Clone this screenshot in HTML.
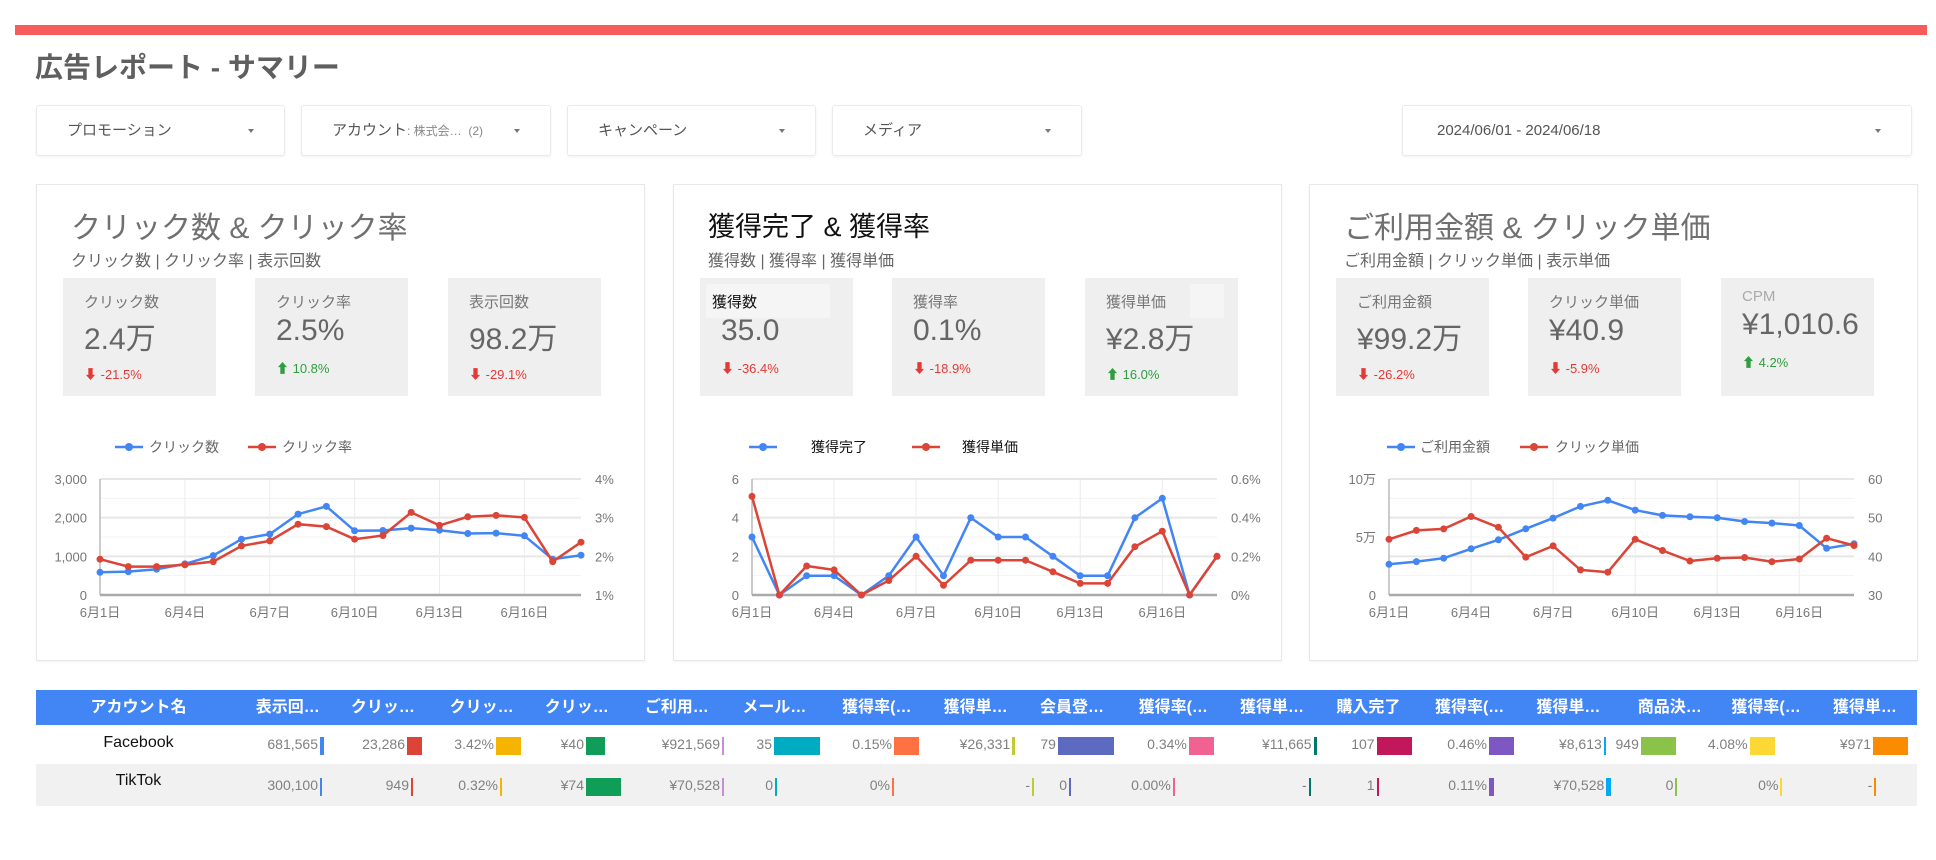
<!DOCTYPE html>
<html><head><meta charset="utf-8">
<style>
*{box-sizing:border-box;margin:0;padding:0}
body{width:1936px;height:860px;background:#fff;font-family:"Liberation Sans","Noto Sans CJK JP",sans-serif;position:relative;overflow:hidden;color:#616161}
.abs{position:absolute}
.bar{left:15px;top:25px;width:1912px;height:10px;background:#f75c5c}
.title{left:35px;top:46px;font-size:28px;font-weight:bold;color:#5f5f5f;letter-spacing:0}
.flt{top:105px;height:51px;border:1px solid #eaeaea;border-radius:3px;box-shadow:0 1px 2px rgba(0,0,0,.06);font-size:15px;color:#555;padding:0 0 0 30px;line-height:49px}
.flt:after{content:"";position:absolute;right:30px;top:23px;border:3px solid transparent;border-top:4px solid #777}
.card{top:184px;width:609px;height:477px;border:1px solid #e8e8e8;box-shadow:0 1px 2px rgba(0,0,0,.05)}
.ct{position:absolute;left:34px;top:18px;font-size:30px;color:#707070}
.cs{position:absolute;left:34px;top:62px;font-size:16px;color:#666}
.kpi{position:absolute;top:93px;width:153px;height:118px;background:#efefef}
.kl{position:absolute;left:21px;top:13px;font-size:15px;color:#777}
.kv{position:absolute;left:21px;top:36px;font-size:30px;color:#666}
.kd{position:absolute;left:21px;font-size:13px}
.dn{color:#e53935}.up{color:#2e9e3e}
svg{position:absolute;left:0;top:0}
.th{top:690px;left:36px;width:1881px;height:35px;background:#4285f4}
.thc{position:absolute;top:0;height:35px;line-height:35px;color:#fff;font-weight:bold;font-size:16px;text-align:center}
.r2{top:764px;left:36px;width:1881px;height:42px;background:#f1f1f1}
.cell{position:absolute;font-size:14px;color:#808080;white-space:nowrap}
</style></head><body>
<div class="abs bar"></div>
<div class="abs title">広告レポート - サマリー</div>
<div class="abs flt" style="left:36px;width:249px">プロモーション</div>
<div class="abs flt" style="left:301px;width:250px">アカウント<span style="font-size:12px;color:#888">: 株式会… &nbsp;(2)</span></div>
<div class="abs flt" style="left:567px;width:249px">キャンペーン</div>
<div class="abs flt" style="left:832px;width:250px">メディア</div>
<div class="abs flt" style="left:1402px;width:510px;padding-left:34px">2024/06/01 - 2024/06/18</div>

<div class="abs card" style="left:36px" id="c1">
 <div class="ct">クリック数 &amp; クリック率</div>
 <div class="cs">クリック数 | クリック率 | 表示回数</div>
 <div class="kpi" style="left:26px"><div class="kl">クリック数</div><div class="kv">2.4万</div><div class="kd dn" style="top:86px">⬇ -21.5%</div></div>
 <div class="kpi" style="left:218px"><div class="kl">クリック率</div><div class="kv">2.5%</div><div class="kd up" style="top:80px">⬆ 10.8%</div></div>
 <div class="kpi" style="left:411px"><div class="kl">表示回数</div><div class="kv">98.2万</div><div class="kd dn" style="top:86px">⬇ -29.1%</div></div>
</div>
<div class="abs card" style="left:673px" id="c2">
 <div class="ct" style="color:#111;font-size:27px;top:20px">獲得完了 &amp; 獲得率</div>
 <div class="cs">獲得数 | 獲得率 | 獲得単価</div>
 <div class="kpi" style="left:26px"><div style="position:absolute;left:6px;top:6px;width:124px;height:34px;background:#f5f5f5"></div><div class="kl" style="color:#111;left:12px">獲得数</div><div class="kv">35.0</div><div class="kd dn" style="top:80px">⬇ -36.4%</div></div>
 <div class="kpi" style="left:218px"><div class="kl">獲得率</div><div class="kv">0.1%</div><div class="kd dn" style="top:80px">⬇ -18.9%</div></div>
 <div class="kpi" style="left:411px"><div style="position:absolute;right:14px;top:6px;width:34px;height:34px;background:#f5f5f5"></div><div class="kl">獲得単価</div><div class="kv">¥2.8万</div><div class="kd up" style="top:86px">⬆ 16.0%</div></div>
</div>
<div class="abs card" style="left:1309px" id="c3">
 <div class="ct">ご利用金額 &amp; クリック単価</div>
 <div class="cs">ご利用金額 | クリック単価 | 表示単価</div>
 <div class="kpi" style="left:26px"><div class="kl">ご利用金額</div><div class="kv">¥99.2万</div><div class="kd dn" style="top:86px">⬇ -26.2%</div></div>
 <div class="kpi" style="left:218px"><div class="kl">クリック単価</div><div class="kv">¥40.9</div><div class="kd dn" style="top:80px">⬇ -5.9%</div></div>
 <div class="kpi" style="left:411px"><div class="kl" style="color:#aaa;top:10px">CPM</div><div class="kv" style="top:30px">¥1,010.6</div><div class="kd up" style="top:74px">⬆ 4.2%</div></div>
</div>

<div class="abs th" id="th"></div>
<div class="abs r2"></div>
<div id="tb"></div>

<script>
var NS="http://www.w3.org/2000/svg";
function mk(card,o){
 var c=document.getElementById(card);
 var s=document.createElementNS(NS,"svg");s.setAttribute("width","609");s.setAttribute("height","477");
 var h="";
 var L=o.L,R=o.R,T=294,B=410,n=18,dx=(R-L)/17;
 for(var i=0;i<=6;i++){var y=B-(B-T)*i/6;h+='<line x1="'+L+'" x2="'+R+'" y1="'+y+'" y2="'+y+'" stroke="'+(i%2?'#f3f3f3':'#e6e6e6')+'" stroke-width="'+(i%2?1:2)+'"/>';}
 for(var i=0;i<6;i++){var x=L+dx*3*i;h+='<line x1="'+x+'" x2="'+x+'" y1="'+T+'" y2="'+B+'" stroke="#ececec"/>';h+='<text x="'+x+'" y="432" font-size="13" fill="#777" text-anchor="middle">'+o.xl[i]+'</text>';}
 h+='<line x1="'+L+'" x2="'+L+'" y1="'+T+'" y2="'+B+'" stroke="#bbb" stroke-width="1.5"/>';
 h+='<line x1="'+L+'" x2="'+R+'" y1="'+B+'" y2="'+B+'" stroke="#aaa" stroke-width="2.5"/>';
 for(var i=0;i<4;i++){var y=B-(B-T)*i/3+5;h+='<text x="'+(L-13)+'" y="'+y+'" font-size="13" fill="#777" text-anchor="end">'+o.yl[i]+'</text>';h+='<text x="'+(R+14)+'" y="'+y+'" font-size="13" fill="#777">'+o.yr[i]+'</text>';}
 function line(d,col){var p=[];for(var i=0;i<n;i++)p.push((L+dx*i).toFixed(1)+","+(B-(B-T)*d[i]/o.max).toFixed(1));
  var r='<polyline points="'+p.join(" ")+'" fill="none" stroke="'+col+'" stroke-width="2.5"/>';
  p.forEach(function(q){var a=q.split(",");r+='<circle cx="'+a[0]+'" cy="'+a[1]+'" r="3.5" fill="'+col+'"/>';});return r;}
 h+=line(o.b,"#4285f4");h+=line(o.r,"#db4437");
 var lg=o.lg;
 h+='<line x1="'+lg[0]+'" x2="'+(lg[0]+28)+'" y1="262" y2="262" stroke="#4285f4" stroke-width="2.5"/><circle cx="'+(lg[0]+14)+'" cy="262" r="4" fill="#4285f4"/>';
 h+='<text x="'+lg[1]+'" y="267" font-size="14" fill="'+o.lc+'">'+o.n1+'</text>';
 h+='<line x1="'+lg[2]+'" x2="'+(lg[2]+28)+'" y1="262" y2="262" stroke="#db4437" stroke-width="2.5"/><circle cx="'+(lg[2]+14)+'" cy="262" r="4" fill="#db4437"/>';
 h+='<text x="'+lg[3]+'" y="267" font-size="14" fill="'+o.lc+'">'+o.n2+'</text>';
 s.innerHTML=h;c.appendChild(s);
}
var xl=["6月1日","6月4日","6月7日","6月10日","6月13日","6月16日"];
mk("c1",{L:63,R:544,max:3000,xl:xl,yl:["0","1,000","2,000","3,000"],yr:["1%","2%","3%","4%"],
 b:[588,605,666,804,1020,1444,1574,2092,2291,1660,1669,1729,1677,1591,1600,1530,925,1029],
 r:[925,735,735,780,865,1270,1400,1830,1770,1444,1540,2135,1800,2023,2058,2006,865,1366],
 lg:[78,112,211,245],lc:"#666",n1:"クリック数",n2:"クリック率"});
mk("c2",{L:78,R:543,max:6,xl:xl,yl:["0","2","4","6"],yr:["0%","0.2%","0.4%","0.6%"],
 b:[3,0,1,1,0,1,3,1,4,3,3,2,1,1,4,5,0,2],
 r:[5.1,0,1.5,1.3,0,0.75,2,0.5,1.8,1.8,1.8,1.2,0.6,0.6,2.5,3.3,0,2],
 lg:[75,137,238,288],lc:"#111",n1:"獲得完了",n2:"獲得単価"});
var rr=[44.4,46.7,47.1,50.3,47.5,39.8,42.7,36.5,35.9,44.4,41.5,38.8,39.5,39.7,38.6,39.3,44.7,42.8].map(function(v){return (v-30)/3;});
mk("c3",{L:79,R:544,max:10,xl:xl,yl:["0","5万","","10万"],yr:["30","40","50","60"],
 b:[2.65,2.88,3.17,3.98,4.76,5.71,6.63,7.64,8.16,7.32,6.86,6.74,6.66,6.34,6.20,5.99,4.03,4.41],r:rr,
 lg:[77,110,210,245],lc:"#666",n1:"ご利用金額",n2:"クリック単価"});
(function(){var s=document.querySelector("#c3 svg");var t=document.createElementNS(NS,"text");t.setAttribute("x","66");t.setAttribute("y",(410-58+5)+"");t.setAttribute("font-size","13");t.setAttribute("fill","#777");t.setAttribute("text-anchor","end");t.textContent="5万";s.appendChild(t);
 var ts=s.querySelectorAll("text");ts.forEach(function(e){if(e.textContent==="5万"&&e.getAttribute("y")!=(410-58+5)+"")e.textContent="";});})();

var heads=["表示回…","クリッ…","クリッ…","クリッ…","ご利用…","メール…","獲得率(…","獲得単…","会員登…","獲得率(…","獲得単…","購入完了","獲得率(…","獲得単…","商品決…","獲得率(…","獲得単…"];
var hc=[233,310,390,467,548,627,710,790,868,950,1030,1108,1190,1270,1352,1430,1510];
var th=document.getElementById("th"),hh='<div class="thc" style="left:0;width:205px">アカウント名</div>';
hc.forEach(function(c,i){var x=c*1.235-36;hh+='<div class="thc" style="left:'+(x-50)+'px;width:100px">'+heads[i]+'</div>';});
th.innerHTML=hh;
var cols=["#4285f4","#db4437","#f4b400","#0f9d58","#c58fd8","#00acc1","#ff7043","#c0ca33","#5c6bc0","#f06292","#00796b","#c2185b","#7e57c2","#03a9f4","#8bc34a","#fdd835","#fb8c00"];
var S=1.235;
var r1=[["681,565",318,4],["23,286",405,15],["3.42%",494,25],["¥40",584,19],["¥921,569",720,2],["35",772,46],["0.15%",892,25],
 ["¥26,331",818*S,3],["79",855*S,56],["0.34%",961*S,25],["¥11,665",1062*S,3],["107",1113*S,35],["0.46%",1204*S,25],["¥8,613",1297*S,2],["949",1327*S,35],["4.08%",1415*S,25],["¥971",1515*S,35]];
var r2=[["300,100",318,2],["949",409,2],["0.32%",498,2],["¥74",584,35],["¥70,528",720,2],["0",773,2],["0%",890,2],
 ["-",834*S,2],["0",864*S,2],["0.00%",948*S,2],["-",1058*S,2],["1",1113*S,2],["0.11%",1204*S,5],["¥70,528",1299*S,5],["0",1355*S,2],["0%",1440*S,2],["-",1516*S,2]];
var tb="";
tb+='<div class="cell" style="left:36px;width:205px;text-align:center;top:734px;color:#111;font-size:16px">Facebook</div>';
tb+='<div class="cell" style="left:36px;width:205px;text-align:center;top:772px;color:#111;font-size:16px">TikTok</div>';
function row(r,top){r.forEach(function(c,i){var re=c[1];var w=c[2];
 tb+='<div class="cell" style="right:'+(1936-re)+'px;top:'+top+'px">'+c[0]+'</div>';
 tb+='<div class="abs" style="left:'+(re+2)+'px;top:'+(top+1)+'px;width:'+w+'px;height:18px;background:'+cols[i]+'"></div>';});}
row(r1,736);row(r2,777);
document.getElementById("tb").innerHTML=tb;
</script>
</body></html>
